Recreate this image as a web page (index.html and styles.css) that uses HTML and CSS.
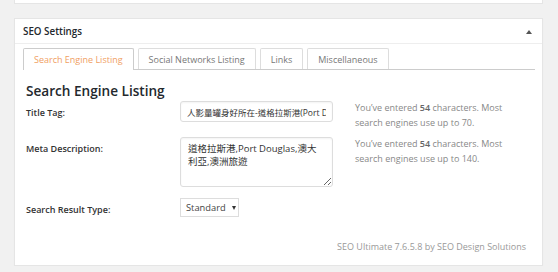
FILE: index.html
```html
<!DOCTYPE html>
<html>
<head>
  <title>SEO Settings</title>
  <link rel="stylesheet" href="styles.css">
</head>
<body>
  <div class="top-box"></div>

  <div class="postbox">
    <div class="postbox-head">
      <h2>SEO Settings</h2>
      <span class="toggle"></span>
    </div>

    <div class="postbox-inside">
      <ul class="tabs">
        <li class="tab active">Search Engine Listing</li>
        <li class="tab">Social Networks Listing</li>
        <li class="tab">Links</li>
        <li class="tab">Miscellaneous</li>
      </ul>

      <div class="panel">
        <h3>Search Engine Listing</h3>

        <div class="form-grid">
          <label class="field-label">Title Tag:</label>
          <input class="text-input" type="text" value="人影量罐身好所在-道格拉斯港(Port Douglas)">
          <p class="help">You&rsquo;ve entered <b>54</b> characters. Most search engines use up to 70.</p>

          <label class="field-label">Meta Description:</label>
          <textarea class="text-area">道格拉斯港,Port Douglas,澳大利亞,澳洲旅遊</textarea>
          <p class="help">You&rsquo;ve entered <b>54</b> characters. Most search engines use up to 140.</p>

          <label class="field-label">Search Result Type:</label>
          <div class="select-box">Standard <span class="caret"></span></div>
          <span></span>
        </div>

        <div class="footer">SEO Ultimate 7.6.5.8 by SEO Design Solutions</div>
      </div>
    </div>
  </div>
</body>
</html>
```

FILE: styles.css
```css
body {
  margin: 0;
  background-color: #f1f1f1;
  font-family: "Open Sans", Arial, "Noto Sans CJK TC", sans-serif;
  font-size: 9px;
  color: #444;
}

.top-box {
  margin: 0 15px 0 14px;
  height: 3px;
  background-color: #fff;
  border: 1px solid #e5e5e5;
  border-top: none;
}

.postbox {
  margin: 14px 15px 0 14px;
  background-color: #fff;
  border: 1px solid #e5e5e5;
  box-shadow: 0 1px 1px rgba(0, 0, 0, 0.04);
  height: 248px;
  box-sizing: border-box;
}

.postbox-head {
  display: flex;
  align-items: center;
  justify-content: space-between;
  height: 24px;
  padding: 0 10px 0 8px;
  border-bottom: 1px solid #eee;
}

.postbox-head h2 {
  margin: 0;
  font-size: 9.8px;
  font-weight: 600;
  color: #23282d;
}

.toggle {
  width: 0;
  height: 0;
  border-left: 3px solid transparent;
  border-right: 3px solid transparent;
  border-bottom: 4px solid #555;
  margin-top: 1px;
}

.postbox-inside {
  padding: 4px 7px 0 8px;
}

.tabs {
  display: flex;
  margin: 0;
  padding: 0;
  list-style: none;
  border-bottom: 1px solid #ccc;
}

.tab {
  height: 20px;
  line-height: 21px;
  padding: 0 10px;
  margin-right: 4px;
  margin-bottom: -1px;
  border: 1px solid #ddd;
  border-bottom: none;
  border-radius: 2px 2px 0 0;
  background-color: #fff;
  font-size: 9px;
  color: #777;
}

.tab.active {
  color: #f0a064;
  border-color: #ccc;
  height: 21px;
}

.panel {
  padding: 0 0 0 3px;
}

.panel h3 {
  margin: 12px 0 1px;
  font-size: 13.6px;
  font-weight: 600;
  color: #23282d;
  line-height: 18px;
}

.form-grid {
  display: grid;
  grid-template-columns: 154px 153px 1fr;
  grid-template-rows: 36px 61px auto;
  align-items: start;
}

.field-label {
  padding-top: 5px;
  font-size: 9px;
  font-weight: 600;
  color: #333;
}

.text-input,
.text-area {
  box-sizing: border-box;
  width: 153px;
  margin: 0;
  border: 1px solid #ddd;
  border-radius: 3px;
  font-family: "Open Sans", "Noto Sans CJK TC", sans-serif;
  color: #333;
  box-shadow: inset 0 1px 2px rgba(0, 0, 0, 0.05);
}

.text-input {
  height: 21px;
  padding: 0 6px;
  font-size: 8.5px;
}

.text-area {
  height: 50px;
  padding: 4px 7px;
  font-size: 9.5px;
  line-height: 13px;
  resize: vertical;
}

.help {
  margin: -1.5px 0 0 22px;
  max-width: 156px;
  font-size: 9px;
  line-height: 15px;
  color: #888;
}

.help b {
  font-weight: 600;
  color: #666;
}

.select-box {
  display: flex;
  align-items: center;
  box-sizing: border-box;
  width: 59px;
  height: 19px;
  padding: 0 4px 0 5px;
  border: 1px solid #ddd;
  font-size: 9.3px;
  color: #444;
}

.caret {
  margin-left: 6px;
  width: 0;
  height: 0;
  border-left: 2.5px solid transparent;
  border-right: 2.5px solid transparent;
  border-top: 4px solid #333;
}

.footer {
  margin-top: 23px;
  padding-right: 9px;
  text-align: right;
  font-size: 9px;
  color: #999;
}
```
